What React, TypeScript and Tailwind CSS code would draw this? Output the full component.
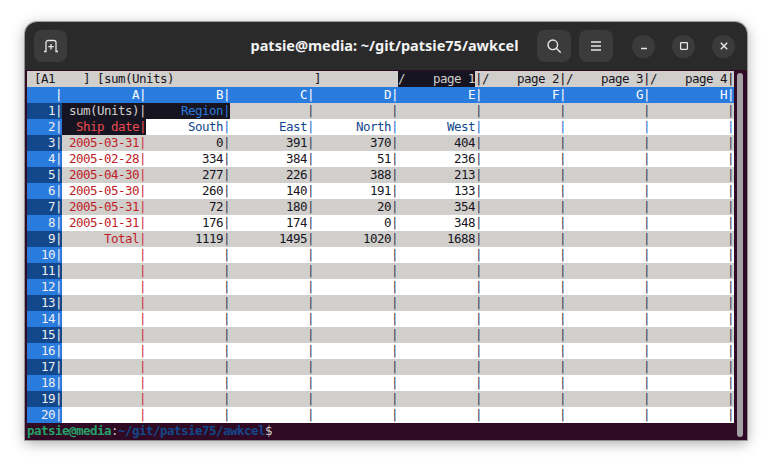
import React from 'react';

const mono = "font-['DejaVu_Sans_Mono',monospace] text-[12.5px] tracking-[-0.525px] leading-[16px]";

const data = [
    ['2005-03-31', '0', '391', '370', '404'],
    ['2005-02-28', '334', '384', '51', '236'],
    ['2005-04-30', '277', '226', '388', '213'],
    ['2005-05-30', '260', '140', '191', '133'],
    ['2005-05-31', '72', '180', '20', '354'],
    ['2005-01-31', '176', '174', '0', '348'],
    ['Total', '1119', '1495', '1020', '1688'],
];

type CellProps = { text?: string; cls: string; tcls?: string; bcls?: string };

const Cell = ({ text = '', cls, tcls = 'text-[#171421]', bcls = 'text-[#383c58]' }: CellProps) => (
    <div className={`flex h-[16px] shrink-0 justify-end ${cls}`}>
        <span className={`whitespace-pre ${tcls}`}>{text}</span>
        <span className={`w-[7px] text-center ${bcls}`}>|</span>
    </div>
);

const Row = ({ r }: { r: number }) => {
    const odd = r % 2 === 1;
    const bg = odd ? 'bg-[#d0cfcc]' : 'bg-white';
    const label = odd ? 'bg-[#12488b]' : 'bg-[#2a7bde]';
    const cells: React.ReactNode[] = [];

    if (r === 1) {
        cells.push(<Cell key="a" text="sum(Units)" cls="w-[84px] bg-[#171421]" tcls="text-[#d0cfcc]" bcls="text-[#d0cfcc]" />);
        cells.push(<Cell key="b" text="Region" cls="w-[84px] bg-[#171421]" tcls="text-[#2a7bde]" bcls="text-[#2a7bde]" />);
        for (let i = 0; i < 6; i++) cells.push(<Cell key={i} cls={`w-[84px] ${bg}`} />);
    } else if (r === 2) {
        cells.push(<Cell key="a" text="Ship date" cls="w-[84px] bg-[#171421]" tcls="text-[#ea4a4f]" bcls="text-[#ea4a4f]" />);
        ['South', 'East', 'North', 'West', '', '', ''].forEach((t, i) => (
            cells.push(<Cell key={i} text={t} cls={`w-[84px] ${bg}`} tcls="text-[#12488b]" bcls="text-[#2a6fd0]" />)
        ));
    } else {
        const d = data[r - 3] || ['', '', '', '', ''];
        cells.push(<Cell key="a" text={d[0]} cls={`w-[84px] ${bg}`} tcls="text-[#c01c28]" bcls="text-[#d0303f]" />);
        for (let i = 1; i < 8; i++) cells.push(<Cell key={i} text={d[i] || ''} cls={`w-[84px] ${bg}`} />);
    }

    return (
        <div className="flex">
            <Cell text={String(r)} cls={`w-[35px] ${label}`} tcls="text-[#eeeeee]" bcls="text-[#eeeeee]" />
            {cells}
        </div>
    );
};

const Page = ({ n, active }: { n: number; active?: boolean }) => (
    <div className="flex w-[84px] shrink-0">
        <span className={`w-[77px] whitespace-pre ${active ? 'bg-[#171421] text-[#d0cfcc]' : ''}`}>{`/    page ${n}`}</span>
        <span className="w-[7px] text-center">|</span>
    </div>
);

const App = () => {
    return (
        <div className="w-[773px] h-[469px] bg-white pl-[25px] pt-[22px] overflow-hidden">
            <div className="flex h-[418px] w-[722px] flex-col overflow-hidden rounded-t-[12px] shadow-[0_3px_14px_rgba(0,0,0,0.35)] ring-1 ring-black/30">
                {/* header bar */}
                <div className="grid h-[48px] shrink-0 grid-cols-[1fr_auto_1fr] items-center bg-[#2a2a2a] pl-[9px] pr-[12px]">
                    <div className="flex">
                        <div className="flex h-[32px] w-[33px] items-center justify-center rounded-[8px] bg-[#3b3b3b]">
                            <svg width="16" height="16" viewBox="0 0 16 16" fill="none" stroke="#e6e6e6" strokeWidth="1.3">
                                <path d="M1 13.5h2V4.5a2 2 0 0 1 2-2h6a2 2 0 0 1 2 2v9h2" />
                                <path d="M8 6v5.5M5.3 8.7h5.4" />
                            </svg>
                        </div>
                    </div>
                    <div className="font-['Noto_Sans',sans-serif] text-[14.5px] font-bold text-[#f2f2f2]">
                        patsie@media: ~/git/patsie75/awkcel
                    </div>
                    <div className="flex items-center justify-end">
                        <div className="flex h-[32px] w-[34px] items-center justify-center rounded-[8px] bg-[#3b3b3b]">
                            <svg width="16" height="16" viewBox="0 0 16 16" fill="none" stroke="#e6e6e6" strokeWidth="1.4">
                                <circle cx="6.8" cy="6.8" r="4.8" />
                                <path d="M10.3 10.3l4 4" strokeLinecap="round" />
                            </svg>
                        </div>
                        <div className="ml-[8px] flex h-[32px] w-[34px] items-center justify-center rounded-[8px] bg-[#3b3b3b]">
                            <svg width="16" height="16" viewBox="0 0 16 16" fill="none" stroke="#e6e6e6" strokeWidth="1.3">
                                <path d="M3 4h10M3 8h10M3 12h10" />
                            </svg>
                        </div>
                        <div className="ml-[19px] flex h-[23px] w-[23px] items-center justify-center rounded-full bg-[#3b3b3b]">
                            <svg width="12" height="12" viewBox="0 0 12 12" fill="none" stroke="#e6e6e6" strokeWidth="1.4">
                                <path d="M3 8.5h6" />
                            </svg>
                        </div>
                        <div className="ml-[17px] flex h-[23px] w-[23px] items-center justify-center rounded-full bg-[#3b3b3b]">
                            <svg width="12" height="12" viewBox="0 0 12 12" fill="none" stroke="#e6e6e6" strokeWidth="1.3">
                                <rect x="2.6" y="2.6" width="6.8" height="6.8" rx="0.8" />
                            </svg>
                        </div>
                        <div className="ml-[17px] flex h-[23px] w-[23px] items-center justify-center rounded-full bg-[#3b3b3b]">
                            <svg width="12" height="12" viewBox="0 0 12 12" fill="none" stroke="#e6e6e6" strokeWidth="1.5">
                                <path d="M2.8 2.8l6.4 6.4M9.2 2.8l-6.4 6.4" />
                            </svg>
                        </div>
                    </div>
                </div>

                {/* terminal */}
                <div className="flex flex-1 bg-[#300a24] pl-[2px]">
                    <div className={`w-[707px] pt-[1px] ${mono}`}>
                        <div className="flex bg-[#d0cfcc] text-[#171421]">
                            <span className="w-[371px] shrink-0 whitespace-pre">{' [A1    ] [sum(Units)                    ]'}</span>
                            <Page n={1} active />
                            <Page n={2} />
                            <Page n={3} />
                            <Page n={4} />
                        </div>
                        <div className="flex bg-[#2a7bde]">
                            <Cell cls="w-[35px]" tcls="text-white" bcls="text-white" />
                            {['A', 'B', 'C', 'D', 'E', 'F', 'G', 'H'].map((c) => (
                                <Cell key={c} text={c} cls="w-[84px]" tcls="text-white" bcls="text-white" />
                            ))}
                        </div>
                        {Array.from({ length: 20 }, (_, i) => <Row key={i} r={i + 1} />)}
                        <div className="whitespace-pre text-[#d0cfcc]">
                            <span className="font-bold text-[#26a269]">patsie@media</span>:
                            <span className="font-bold text-[#12488b]">~/git/patsie75/awkcel</span>$
                        </div>
                    </div>
                    <div className="ml-[3px] mt-[3px] mb-[3px] w-[6px] rounded-full bg-[#a3a1a3]" />
                </div>
            </div>
        </div>
    );
};

export default App;
